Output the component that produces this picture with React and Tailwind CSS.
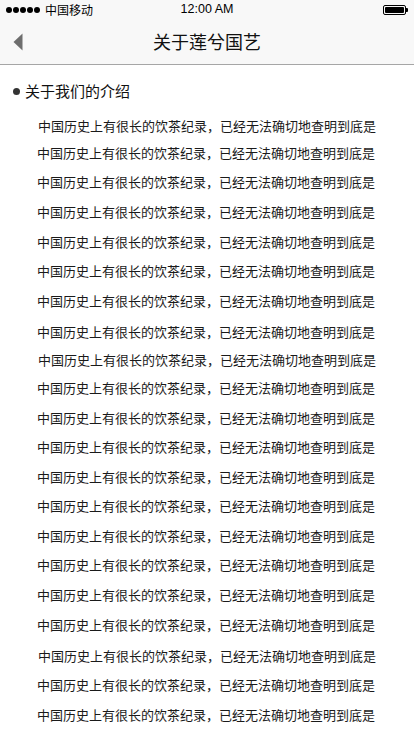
const lines = [
  { mt: "mt-[17px]", ml: "pl-[38px]" },
  { mt: "mt-[11px]", ml: "pl-[37px]" },
  { mt: "mt-[13px]", ml: "pl-[37px]" },
  { mt: "mt-[14px]", ml: "pl-[37px]" },
  { mt: "mt-[14px]", ml: "pl-[37px]" },
  { mt: "mt-[13px]", ml: "pl-[37px]" },
  { mt: "mt-[14px]", ml: "pl-[37px]" },
  { mt: "mt-[15px]", ml: "pl-[37px]" },
  { mt: "mt-[12px]", ml: "pl-[38px]" },
  { mt: "mt-[12px]", ml: "pl-[37px]" },
  { mt: "mt-[14px]", ml: "pl-[37px]" },
  { mt: "mt-[13px]", ml: "pl-[37px]" },
  { mt: "mt-[14px]", ml: "pl-[37px]" },
  { mt: "mt-[13px]", ml: "pl-[37px]" },
  { mt: "mt-[14px]", ml: "pl-[37px]" },
  { mt: "mt-[13px]", ml: "pl-[37px]" },
  { mt: "mt-[14px]", ml: "pl-[37px]" },
  { mt: "mt-[14px]", ml: "pl-[37px]" },
  { mt: "mt-[15px]", ml: "pl-[38px]" },
  { mt: "mt-[13px]", ml: "pl-[37px]" },
  { mt: "mt-[14px]", ml: "pl-[37px]" },
];

const TEXT = "中国历史上有很长的饮茶纪录，已经无法确切地查明到底是";

function StatusBar() {
  return (
    <div className="relative flex h-[20px] items-center px-[6px] text-[12px] text-black">
      <div className="flex items-center gap-[1px]">
        {[0, 1, 2, 3, 4].map((i) => (
          <span key={i} className="block h-[6px] w-[6px] rounded-full bg-black" />
        ))}
      </div>
      <span className="ml-[5px] leading-none">中国移动</span>
      <span className="absolute left-1/2 top-[3px] -translate-x-1/2 font-['Liberation_Sans',sans-serif] text-[12.5px] leading-none">
        12:00 AM
      </span>
      <div className="ml-auto flex items-center">
        <div className="h-[10px] w-[23px] rounded-[2px] border border-black p-[1px]">
          <div className="h-full w-full rounded-[1px] bg-black" />
        </div>
        <div className="h-[4px] w-[2px] rounded-r-[1px] bg-black" />
      </div>
    </div>
  );
}

function NavBar() {
  return (
    <div className="relative flex h-[45px] items-center justify-center border-b border-[#a6a6a6]">
      <button type="button" className="absolute left-[13px] top-[13px]">
        <svg width="10" height="18" viewBox="0 0 10 18">
          <path d="M9.5 0.5 L0.5 9 L9.5 17.5 Z" fill="#6e6e6e" />
        </svg>
      </button>
      <h1 className="-mt-[2px] text-[18px] leading-none text-[#111]">关于莲兮国艺</h1>
    </div>
  );
}

export default function App() {
  return (
    <div className="min-h-[736px] w-[414px] overflow-hidden bg-white font-['Noto_Sans_CJK_SC','Noto_Sans',sans-serif]">
      <div className="bg-[#f8f8f8]">
        <StatusBar />
        <NavBar />
      </div>

      <section className="pb-4">
        <div className="mt-[16px] flex items-center pl-[13px]">
          <span className="block h-[7px] w-[7px] rounded-full bg-[#333]" />
          <h2 className="ml-[5px] text-[15px] leading-[20px] text-[#111]">关于我们的介绍</h2>
        </div>
        {lines.map((l, i) => (
          <p key={i} className={`${l.mt} ${l.ml} whitespace-nowrap text-[13px] leading-[16px] text-[#1a1a1a]`}>
            {TEXT}
          </p>
        ))}
      </section>
    </div>
  );
}
